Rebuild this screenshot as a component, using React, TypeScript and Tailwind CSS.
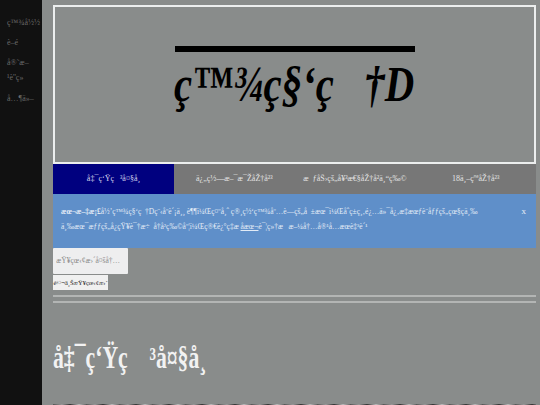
import React from 'react';

const serif = "font-['Liberation_Serif',serif]";

const tabs = [
  'ä¿„ç½—æ–¯æ¯ŽåŽ†å²³',
  'æ  ƒåŠ›çš„å¥³æ€§åŽ†å²ä¸“ç‰©',
  '18ä¸–çºªåŽ†å²³',
];

const App: React.FC = () => {
  return (
    <div className={`flex h-[405px] w-[540px] overflow-hidden bg-[#898c8b] ${serif}`}>
      <nav className="flex h-full w-[42px] flex-none flex-col bg-[#111111] pl-[7px] pt-[15px] text-[8px] leading-[15px] text-[#6a6a6a]">
        <a className="mb-[5px] whitespace-nowrap">ç™¾å½½</a>
        <a className="mb-[5px] whitespace-nowrap">è–é</a>
        <a className="whitespace-nowrap">å®˜æ–</a>
        <a className="mb-[6px] whitespace-nowrap">¹è''ç»</a>
        <a className="whitespace-nowrap">å…¶ä»–</a>
      </nav>

      <main className="flex min-w-0 flex-1 flex-col pl-[11px] pr-[4px] pt-[5px]">
        <header className="flex h-[159px] flex-none flex-col items-center border-2 border-[#eceeee] pt-[39px]">
          <div className="h-[6px] w-[240px] flex-none bg-black" />
          <h1 className="mt-[5px] scale-x-[.8] whitespace-pre text-[51px] font-bold italic leading-[54px] text-black">ç™¾ç§‘ç   †D</h1>
        </header>

        <div className="flex h-[30px] flex-none text-[8px] text-[#e4e4e4]">
          <button className="w-[121px] bg-[#00007f] text-center text-[#d8d8ee]">
            <span className="whitespace-pre">å‡¯ç‘Ÿç   ³å¤§å¸</span>
          </button>
          {tabs.map((tab, i) => (
            <button key={i} className="flex-1 whitespace-pre bg-[#777777] text-center">
              {tab}
            </button>
          ))}
        </div>

        <div className="flex h-[54px] flex-none items-start justify-between bg-[#5f8fc9] pl-[8px] pr-[10px] pt-[10px] text-[7.5px] leading-[15px] text-[#e2ebf6]">
          <p className="whitespace-pre">
            <b>æœ¬æ–‡æ¡£</b>å½’ç™¾ç§‘ç  †Dç¨‹åºè´¡ä¸¸ è¶¶ï¼Œç¤ºå¸ˆ ç®¸ç½‘ç™¾åº…è—çš„å  ±æœ¯ï¼Œåˆç±ç¸‚é¿…ä»¯å¿‚æ‡æœƒè¨åƒƒçš„çœ§çä¸‰
            <br />
            ä¸‰æœ¯æƒƒçš„å¿çŸ¥è¯†æ÷  å†å²ç‰©åº¦ï¼Œç®€è¿°ç‡æ <u>åæœ¬</u>è¯¦ç»†æ   æ–¼å†…å®¹å…æœè‡³è´¹
          </p>
          <button className="text-[9px] leading-[15px] text-[#e8eef7]">x</button>
        </div>

        <button className="flex h-[26px] w-[75px] flex-none items-center justify-end rounded-[1px] bg-[#eeeeef] pr-[8px] text-[7.5px] text-[#8a8a8a]">
          æŸ¥çœ‹¢æ›´å¤šå†…
        </button>
        <button className="mt-[1px] h-[15px] w-[55px] flex-none whitespace-nowrap bg-[#f0f0f0] text-[6.5px] text-[#222222]">
          é©¬ä¸ŠæŸ¥çœ‹¢æ›´
        </button>

        <hr className="mt-[5px] h-[2px] flex-none border-0 bg-[#b3b5b4]" />
        <hr className="mt-[4px] h-[2px] flex-none border-0 bg-[#b3b5b4]" />

        <h2 className="mt-[37px] flex-none origin-left scale-x-[.7] whitespace-pre text-[31px] font-bold leading-[36px] text-[#f2f2f2]">å‡¯ç‘Ÿç    ³å¤§å¸</h2>

        {/* top edge of the cut-off image below the heading */}
        <div className="mt-[28px] h-[1px] flex-none bg-[repeating-linear-gradient(90deg,#555555_0,#999999_9px,#333333_17px,#bbbbbb_26px,#666666_33px)]" />
      </main>
    </div>
  );
};

export default App;
